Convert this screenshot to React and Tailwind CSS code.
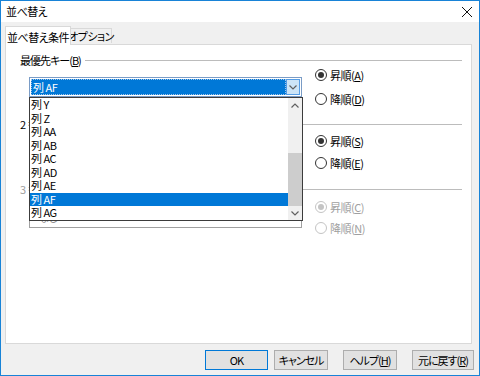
import React from 'react';

const listItems = ['Y', 'Z', 'AA', 'AB', 'AC', 'AD', 'AE', 'AF', 'AG'];

const Mn = ({ children }) => <span className="underline underline-offset-[1px]">{children}</span>;

const ChevronDown = ({ color = '#606060' }) => (
  <svg width="8" height="5" viewBox="0 0 8 5">
    <path d="M0.5 0.5 L4 4 L7.5 0.5" stroke={color} strokeWidth="1.2" fill="none" />
  </svg>
);

const ChevronUp = ({ color = '#606060' }) => (
  <svg width="8" height="5" viewBox="0 0 8 5">
    <path d="M0.5 4.5 L4 1 L7.5 4.5" stroke={color} strokeWidth="1.2" fill="none" />
  </svg>
);

function Radio({ checked, disabled, children }) {
  return (
    <div className={`flex h-[14px] items-center gap-[3px] ${disabled ? 'text-[#a0a0a0]' : 'text-black'}`}>
      <span
        className={`flex h-[12px] w-[12px] items-center justify-center rounded-full border bg-white ${
          disabled ? 'border-[#c4c4c4]' : 'border-[#333333]'
        }`}
      >
        {checked && <span className={`h-[6px] w-[6px] rounded-full ${disabled ? 'bg-[#c4c4c4]' : 'bg-[#333333]'}`} />}
      </span>
      <span>{children}</span>
    </div>
  );
}

function GroupLabel({ children, dim, className }) {
  return (
    <div className={`flex h-[14px] items-center pl-[14px] pr-[9px] ${className}`}>
      <span className={`tracking-[-1px] ${dim ? 'text-[#a0a0a0]' : ''}`}>{children}</span>
      <span className="ml-[4px] h-px flex-1 bg-[#bcbcbc]" />
    </div>
  );
}

function PlainCombo({ dim }) {
  return (
    <div className="flex h-[20px] w-[273px] items-center border border-[#a0a0a0] bg-white pl-[3px]">
      <span className={`flex-1 ${dim ? 'text-[#8a8a8a]' : ''}`}>- なし -</span>
      <span className="flex h-full w-[15px] items-center justify-center">
        <ChevronDown color={dim ? '#bcbcbc' : '#606060'} />
      </span>
    </div>
  );
}

function Button({ children, primary, className }) {
  return (
    <div
      className={`flex h-[20px] items-center justify-center border bg-[#e1e1e1] tracking-[-1px] ${
        primary ? 'border-[#0078d7]' : 'border-[#adadad]'
      } ${className}`}
    >
      {children}
    </div>
  );
}

export default function App() {
  return (
    <div className="h-[376px] w-[480px] overflow-hidden whitespace-nowrap border border-[#1883d7] bg-[#f0f0f0] font-['Noto_Sans_CJK_JP','Noto_Sans',sans-serif] text-[11px] leading-none tracking-[-0.5px] text-black [font-feature-settings:'palt']">
      {/* title bar */}
      <div className="flex h-[21px] items-center justify-between bg-white pl-[5px] pr-[7px]">
        <span>並べ替え</span>
        <svg width="10" height="10" viewBox="0 0 10 10">
          <path d="M0 0 L10 10 M10 0 L0 10" stroke="#111111" strokeWidth="1" />
        </svg>
      </div>

      {/* tabs */}
      <div className="flex items-end pl-[4px] pt-[4px]">
        <div className="relative z-10 -mb-px flex h-[19px] w-[66px] items-center justify-center border-x border-t border-[#d9d9d9] bg-white pt-[2px]">
          並べ替え条件
        </div>
        <div className="mb-px flex h-[15px] w-[41px] items-center justify-center border-r border-t border-[#d9d9d9] pt-[1px]">
          オプション
        </div>
      </div>

      {/* tab panel */}
      <div className="relative ml-[4px] h-[300px] w-[467px] border border-[#d9d9d9] bg-white">
        {/* key 1 */}
        <GroupLabel className="mt-[8px]">
          最優先キー(<Mn>B</Mn>)
        </GroupLabel>
        <div className="mt-[1px] flex items-center pl-[23px]">
          <div className="flex h-[20px] w-[273px] items-stretch border border-[#7a9cc6] bg-white p-px">
            <div className="flex flex-1 items-center border border-dotted border-[#9fc3ea] bg-[#0078d7] pl-[1px] text-white">
              列 AF
            </div>
            <div className="flex w-[14px] items-center justify-center border border-[#569de5] bg-[#cce4f7]">
              <ChevronDown />
            </div>
          </div>
          <div className="ml-[13px] flex flex-col gap-[10px]">
            <Radio checked>
              昇順(<Mn>A</Mn>)
            </Radio>
            <Radio>
              降順(<Mn>D</Mn>)
            </Radio>
          </div>
        </div>

        {/* key 2 */}
        <GroupLabel className="mt-[11px]">
          2&nbsp;&nbsp;番目のキー(<Mn>T</Mn>)
        </GroupLabel>
        <div className="mt-[3px] flex items-center pl-[23px]">
          <PlainCombo />
          <div className="ml-[13px] flex flex-col gap-[8px]">
            <Radio checked>
              昇順(<Mn>S</Mn>)
            </Radio>
            <Radio>
              降順(<Mn>E</Mn>)
            </Radio>
          </div>
        </div>

        {/* key 3 */}
        <GroupLabel className="mt-[12px]" dim>
          3&nbsp;&nbsp;番目のキー(<Mn>Y</Mn>)
        </GroupLabel>
        <div className="mt-[4px] flex items-center pl-[23px]">
          <PlainCombo dim />
          <div className="ml-[13px] flex flex-col gap-[7px]">
            <Radio checked disabled>
              昇順(<Mn>C</Mn>)
            </Radio>
            <Radio disabled>
              降順(<Mn>N</Mn>)
            </Radio>
          </div>
        </div>

        {/* open dropdown list */}
        <div className="absolute left-[23px] top-[52px] z-20 flex h-[124px] w-[274px] border border-[#3c3c3c] bg-white">
          <div className="flex-1">
            {listItems.map((c) => (
              <div
                key={c}
                className={`flex h-[13.5px] items-center pl-[1px] ${c === 'AF' ? 'bg-[#0078d7] text-white' : ''}`}
              >
                列 {c}
              </div>
            ))}
          </div>
          <div className="flex w-[14px] flex-col bg-[#f0f0f0]">
            <div className="flex h-[14px] items-center justify-center">
              <ChevronUp />
            </div>
            <div className="flex flex-1 flex-col justify-end">
              <div className="h-[53px] bg-[#cdcdcd]" />
            </div>
            <div className="flex h-[14px] items-center justify-center">
              <ChevronDown />
            </div>
          </div>
        </div>
      </div>

      {/* buttons */}
      <div className="mt-[6px] flex justify-end pr-[5px]">
        <Button primary className="w-[63px]">
          OK
        </Button>
        <Button className="ml-[6px] w-[54px]">キャンセル</Button>
        <Button className="ml-[15px] w-[54px]">
          ヘルプ(<Mn>H</Mn>)
        </Button>
        <Button className="ml-[15px] w-[62px]">
          元に戻す(<Mn>R</Mn>)
        </Button>
      </div>
    </div>
  );
}
